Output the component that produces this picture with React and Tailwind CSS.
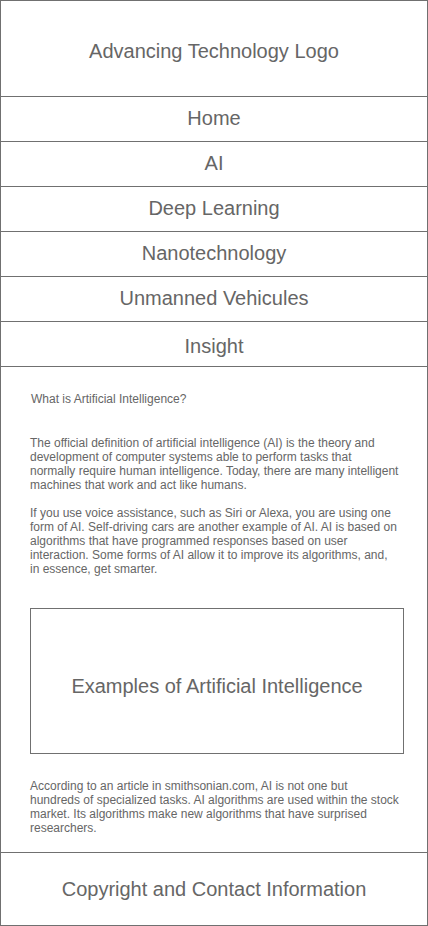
export default function App() {
  const navItems = ['Home', 'AI', 'Deep Learning', 'Nanotechnology', 'Unmanned Vehicules']

  return (
    <div className="w-[428px] h-[926px] bg-white border border-[#707070] flex flex-col text-[#666] font-['Liberation_Sans',Arial,sans-serif]">
      {/* header */}
      <header className="h-[96px] shrink-0 border-b border-[#707070] flex items-center justify-center pt-[4px]">
        <span className="text-[20px]">Advancing Technology Logo</span>
      </header>

      {/* nav */}
      <nav className="shrink-0">
        {navItems.map((item) => (
          <div key={item} className="h-[45px] border-b border-[#707070] flex items-center justify-center pb-[3px] text-[20px]">
            {item}
          </div>
        ))}
        <div className="h-[45px] border-b border-[#707070] flex items-center justify-center pt-[4px] text-[20px]">
          Insight
        </div>
      </nav>

      {/* main content */}
      <main className="flex-1 pl-[29px] pr-[8px] pt-[25px] text-[12px] leading-[14px] whitespace-nowrap">
        <h2 className="pl-px">What is Artificial Intelligence?</h2>
        <p className="mt-[30px]">
          The official definition of artificial intelligence (AI) is the theory and<br />
          development of computer systems able to perform tasks that<br />
          normally require human intelligence. Today, there are many intelligent<br />
          machines that work and act like humans.
        </p>
        <p className="mt-[14px]">
          If you use voice assistance, such as Siri or Alexa, you are using one<br />
          form of AI. Self-driving cars are another example of AI. AI is based on<br />
          algorithms that have programmed responses based on user<br />
          interaction. Some forms of AI allow it to improve its algorithms, and,<br />
          in essence, get smarter.
        </p>
        <div className="mt-[32px] w-[374px] h-[146px] border border-[#707070] flex items-center justify-center pt-[10px] text-[20px] leading-normal">
          Examples of Artificial Intelligence
        </div>
        <p className="mt-[25px]">
          According to an article in smithsonian.com, AI is not one but<br />
          hundreds of specialized tasks. AI algorithms are used within the stock<br />
          market. Its algorithms make new algorithms that have surprised<br />
          researchers.
        </p>
      </main>

      {/* footer */}
      <footer className="h-[73px] shrink-0 border-t border-[#707070] flex items-center justify-center text-[20px]">
        Copyright and Contact Information
      </footer>
    </div>
  )
}
